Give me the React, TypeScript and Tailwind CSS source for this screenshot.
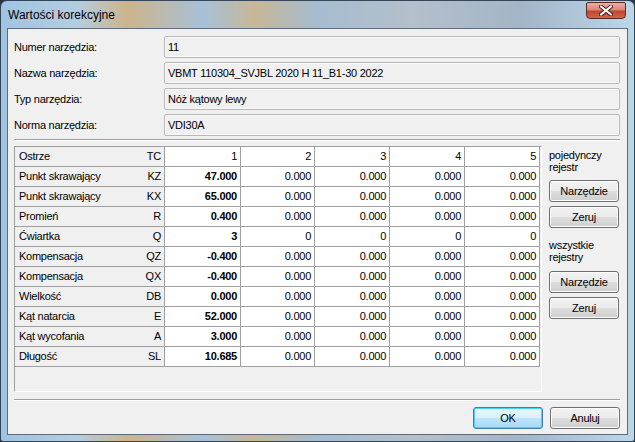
import React from 'react';

const info = [
  ['Numer narzędzia:', '11'],
  ['Nazwa narzędzia:', 'VBMT 110304_SVJBL 2020 H 11_B1-30 2022'],
  ['Typ narzędzia:', 'Nóż kątowy lewy'],
  ['Norma narzędzia:', 'VDI30A'],
];

const z = ['0.000', '0.000', '0.000', '0.000'];

const rows: [string, string, string, string[]][] = [
  ['Punkt skrawający', 'KZ', '47.000', z],
  ['Punkt skrawający', 'KX', '65.000', z],
  ['Promień', 'R', '0.400', z],
  ['Ćwiartka', 'Q', '3', ['0', '0', '0', '0']],
  ['Kompensacja', 'QZ', '-0.400', z],
  ['Kompensacja', 'QX', '-0.400', z],
  ['Wielkość', 'DB', '0.000', z],
  ['Kąt natarcia', 'E', '52.000', z],
  ['Kąt wycofania', 'A', '3.000', z],
  ['Długość', 'SL', '10.685', z],
];

const colW = ['w-[74px]', 'w-[75px]', 'w-[75px]', 'w-[75px]'];

function VistaButton({ children, primary }: { children: React.ReactNode; primary?: boolean }) {
  return (
    <div
      className={`w-[70px] h-[22px] rounded-[3px] border flex items-center justify-center ${
        primary
          ? 'border-[#3c7fb1] bg-[linear-gradient(#eaf6fd_0%,#d9f0fc_50%,#bee6fd_50%,#a7d9f5_100%)] shadow-[inset_0_0_0_1px_#48d0f5]'
          : 'border-[#707070] bg-[linear-gradient(#f2f2f2_0%,#ebebeb_50%,#dddddd_50%,#cfcfcf_100%)] shadow-[inset_0_0_0_1px_#fcfcfc]'
      }`}
    >
      {children}
    </div>
  );
}

function Row({ label, code, first, rest, header }: { label: string; code: string; first: string; rest: string[]; header?: boolean }) {
  return (
    <div className="flex h-[20px]">
      <div className="w-[150px] h-full flex items-center justify-between pl-[4px] pr-[3px] bg-[#f0f0f0] border-r border-b border-[#a0a0a0]">
        <span>{label}</span>
        <span>{code}</span>
      </div>
      <div className={`w-[76px] h-full flex items-center justify-end pr-[3px] bg-white border-r border-b border-[#a0a0a0] ${header ? '' : 'font-bold'}`}>
        {first}
      </div>
      {rest.map((v, i) => (
        <div key={i} className={`${colW[i]} h-full flex items-center justify-end pr-[3px] bg-white border-r border-b border-[#a0a0a0]`}>
          {v}
        </div>
      ))}
    </div>
  );
}

export default function App() {
  return (
    <div className="w-[635px] h-[442px] bg-[#2a3646] font-['Liberation_Sans',sans-serif] text-[11px] tracking-[-0.25px] text-black leading-none">
      <div className="w-full h-full rounded-t-[7px] rounded-b-[3px] border border-[#34465a] flex flex-col px-[6px] pb-[6px] bg-[linear-gradient(90deg,#9fc4e2_0%,#b3cde0_12%,#cdb48c_20%,#a7c1d8_32%,#c7b797_40%,#a6bcd0_50%,#b4c0cb_65%,#a3b5c7_82%,#bcd6ea_100%)]">
        <div className="h-[27px] flex justify-between">
          <div className="pl-[1px] pt-[8px] text-[12px] tracking-normal text-black">Wartości korekcyjne</div>
          <div className="mt-[1px] mr-[2px] w-[40px] h-[17px] rounded-b-[4px] rounded-t-[2px] border border-[#5d2a1e] bg-[linear-gradient(#eab0a2_0%,#d98878_45%,#c5452f_55%,#d0654a_100%)] flex items-center justify-center">
            <svg width="14" height="11" viewBox="0 0 14 11">
              <path d="M2 1.5 L12 9.5 M12 1.5 L2 9.5" stroke="#4a1a12" strokeWidth="4" strokeLinecap="square" />
              <path d="M2 1.5 L12 9.5 M12 1.5 L2 9.5" stroke="#ffffff" strokeWidth="2" strokeLinecap="square" />
            </svg>
          </div>
        </div>

        <div className="flex-1 border border-[#5e6b78] bg-[#f0f0f0] flex flex-col pl-[6px] pr-[7px] pt-[7px]">
          <div className="flex flex-col gap-[4px]">
            {info.map(([l, v]) => (
              <div key={l} className="flex items-center h-[22px]">
                <div className="w-[150px]">{l}</div>
                <div className="flex-1 h-[22px] rounded-[2px] border border-[#b7b7b7] shadow-[inset_0_0_0_1px_#fafafa] flex items-center pl-[3px]">
                  {v}
                </div>
              </div>
            ))}
          </div>

          <div className="mt-[3px] border-t border-b border-t-[#a0a0a0] border-b-white" />

          <div className="mt-[5px] flex gap-[7px]">
            <div className="w-[528px] h-[246px] border border-t-[#a0a0a0] border-l-[#a0a0a0] border-r-white border-b-white bg-[#f0f0f0]">
              <Row label="Ostrze" code="TC" first="1" rest={['2', '3', '4', '5']} header />
              {rows.map(([l, c, f, r], i) => (
                <Row key={i} label={l} code={c} first={f} rest={r} />
              ))}
            </div>

            <div className="w-[70px] flex flex-col pt-[3px] leading-[12px]">
              <div>pojedynczy</div>
              <div>rejestr</div>
              <div className="mt-[7px]">
                <VistaButton>Narzędzie</VistaButton>
              </div>
              <div className="mt-[4px]">
                <VistaButton>Zeruj</VistaButton>
              </div>
              <div className="mt-[11px]">wszystkie</div>
              <div>rejestry</div>
              <div className="mt-[8px]">
                <VistaButton>Narzędzie</VistaButton>
              </div>
              <div className="mt-[4px]">
                <VistaButton>Zeruj</VistaButton>
              </div>
            </div>
          </div>

          <div className="mt-[7px] border-t border-b border-t-[#a0a0a0] border-b-white" />

          <div className="mt-[6px] flex justify-end gap-[7px]">
            <VistaButton primary>OK</VistaButton>
            <VistaButton>Anuluj</VistaButton>
          </div>
        </div>
      </div>
    </div>
  );
}
